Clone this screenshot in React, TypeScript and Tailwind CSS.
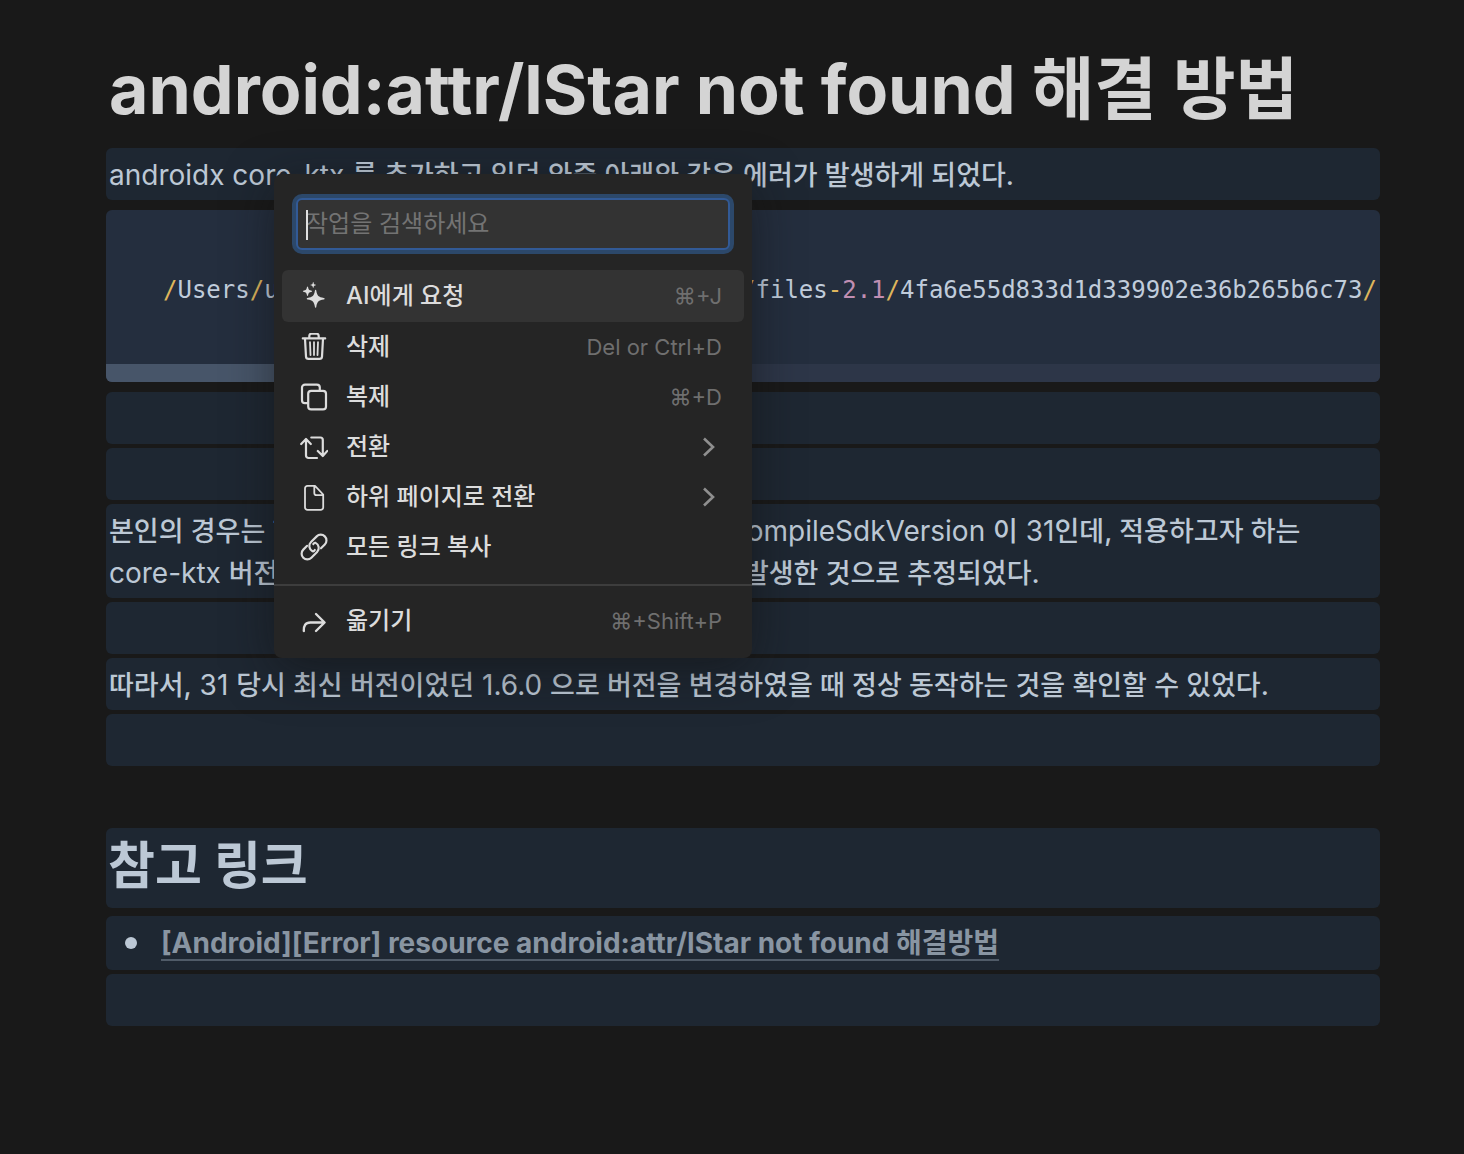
import type { ReactNode } from 'react';

type MenuItem = {
  label: string;
  icon: ReactNode;
  shortcut?: string;
  submenu?: boolean;
};

function Icon({ children }: { children: ReactNode }) {
  return (
    <svg
      viewBox="0 0 28 28"
      className="size-7 shrink-0"
      fill="none"
      stroke="currentColor"
      strokeWidth="2.2"
      strokeLinecap="round"
      strokeLinejoin="round"
      aria-hidden="true"
    >
      {children}
    </svg>
  );
}

const items: MenuItem[] = [
  {
    label: 'AI에게 요청',
    shortcut: '⌘+J',
    icon: (
      <Icon>
        <g fill="currentColor" stroke="none">
          <path d="M15.6 7.8c.5 0 .6.4.7.9.8 5 2.2 6.3 7.5 7.2.5.1.9.3.9.8s-.4.7-.9.8c-5.3.9-6.7 2.2-7.5 7.3-.1.5-.2.9-.7.9s-.6-.4-.7-.9c-.8-5.1-2.2-6.4-7.3-7.3-.5-.1-.9-.3-.9-.8s.4-.7.9-.8c5.1-.9 6.5-2.2 7.3-7.2.1-.5.2-.9.7-.9z" />
          <path d="M7.5 4.5c.3 0 .4.2.5.5.4 2.6 1 3.3 3.7 3.8.3.1.4.2.4.5s-.1.4-.4.5c-2.7.5-3.3 1.2-3.7 3.8-.1.3-.2.5-.5.5s-.4-.2-.5-.5c-.4-2.6-1-3.3-3.7-3.8-.3-.1-.4-.2-.4-.5s.1-.4.4-.5c2.700-.5 3.300-1.200 3.700-3.800.1-.3.200-.5.500-.5z" />
          <path d="M13.2.1c.2 0 .3.1.3.3.3 1.6.7 2 2.2 2.3.2 0 .3.1.3.3s-.1.3-.3.3c-1.5.3-1.9.7-2.2 2.3 0 .2-.1.3-.3.3s-.3-.1-.3-.3c-.3-1.600-.7-2-2.200-2.300-.2 0-.3-.1-.3-.3s.1-.3.300-.3c1.500-.3 1.900-.7 2.200-2.300 0-.2.100-.3.300-.3z" />
        </g>
      </Icon>
    ),
  },
  {
    label: '삭제',
    shortcut: 'Del or Ctrl+D',
    icon: (
      <Icon>
        <path d="M2.8 5.4h22.4M9.3 5V3A2.3 2.3 0 0 1 11.600.7h4.800A2.300 2.300 0 0 1 18.700 3v2" />
        <path d="M5 5.8 6 23.600a2.500 2.500 0 0 0 2.500 2.300h11a2.500 2.500 0 0 0 2.500-2.300L23 5.800" />
        <path strokeWidth="1.8" d="m10 9.200.5 12.800M14 9.200v12.800M18 9.200l-.5 12.800" />
      </Icon>
    ),
  },
  {
    label: '복제',
    shortcut: '⌘+D',
    icon: (
      <Icon>
        <rect x="8.2" y="7.8" width="17.8" height="18.6" rx="3" />
        <path d="M19.8 7.4V4.6a3 3 0 0 0-3-3H5a3 3 0 0 0-3 3v12.6a3 3 0 0 0 3 3h2.8" />
      </Icon>
    ),
  },
  {
    label: '전환',
    submenu: true,
    icon: (
      <Icon>
        <path d="M17 25H8.5A2.5 2.5 0 0 1 6 22.500V6.500M1.200 11 6 6l4.800 5M11.300 4.500h9A2.500 2.500 0 0 1 22.800 7v15.500M17.800 18l5 5 4.500-5" />
      </Icon>
    ),
  },
  {
    label: '하위 페이지로 전환',
    submenu: true,
    icon: (
      <Icon>
        <path
          strokeWidth="1.8"
          d="M15 2.9H7.5A2.5 2.5 0 0 0 5 5.400v19a2.500 2.500 0 0 0 2.500 2.500h13.200a2.500 2.500 0 0 0 2.500-2.500V11.500zM14.300 3v7a2.200 2.200 0 0 0 2.200 2.200h6.700"
        />
      </Icon>
    ),
  },
  {
    label: '모든 링크 복사',
    icon: (
      <Icon>
        <g transform="translate(-1.2 -1.2) scale(1.27)" strokeWidth="1.7">
          <path d="M11.4 9.7c.5-.9 1.2-1.2 1.8-1a4.5 4.5 0 0 1 1.2 7.2l-4.5 4.5a4.5 4.5 0 0 1-6.364-6.364l3-3" />
          <path d="M12.6 14.3c-.5.9-1.2 1.2-1.8 1a4.5 4.5 0 0 1-1.2-7.2l4.5-4.5a4.5 4.5 0 0 1 6.364 6.364l-3 3" />
        </g>
      </Icon>
    ),
  },
];

const moveItem: MenuItem = {
  label: '옮기기',
  shortcut: '⌘+Shift+P',
  icon: (
    <Icon>
      <path strokeWidth="2.4" d="M3.8 24c-.3-5.5 1.7-8.5 6.5-8.5h14M16 7l8.6 8.5L16 24" />
    </Icon>
  ),
};

function MenuRow({ item, active }: { item: MenuItem; active?: boolean }) {
  return (
    <li>
      <button
        type="button"
        className={`flex w-full items-center rounded-md pl-[18px] pr-[22px] text-left ${
          active ? 'h-[52px] bg-[#333333]' : 'h-[50px] hover:bg-[#333333]'
        }`}
      >
        {item.icon}
        <span className="ml-[18px] flex-1 text-2xl font-medium">{item.label}</span>
        {item.shortcut && <span className="text-[22px] text-[#6f6f6f]">{item.shortcut}</span>}
        {item.submenu && (
          <span className="text-[#8f8f8f]">
            <Icon>
              <path strokeWidth="2.6" strokeLinecap="butt" strokeLinejoin="miter" d="m10 5.500 9 8.500-9 8.500" />
            </Icon>
          </span>
        )}
      </button>
    </li>
  );
}

function ActionMenu() {
  return (
    <div className="absolute top-[174px] left-[274px] w-[478px] rounded-lg bg-[#252525] pt-6 pb-3 text-[#dcdcdc] shadow-[0_12px_48px_rgba(15,15,15,0.5)]">
      <div className="relative mx-[22px] mb-5">
        <input
          type="text"
          aria-label="작업을 검색하세요"
          placeholder="작업을 검색하세요"
          className="block h-[52px] w-full rounded-md border-2 border-[#325a96] bg-[#333333] px-2 pb-0.5 text-2xl caret-transparent ring-4 ring-[#2c486a] outline-none placeholder:text-[#737373]"
        />
        <span className="absolute top-3 left-2.5 h-[30px] w-0.5 bg-[#e0e0e0]" />
      </div>
      <ul className="px-2">
        {items.map((item, i) => (
          <MenuRow key={item.label} item={item} active={i === 0} />
        ))}
      </ul>
      <hr className="mt-3 mb-2.5 border-t-2 border-[#3d3d3d]" />
      <ul className="px-2">
        <MenuRow item={moveItem} />
      </ul>
    </div>
  );
}

function Block({ children }: { children?: ReactNode }) {
  return <p className="min-h-[52px] rounded-md bg-[#1e2732] px-[3px] pt-1.5 pb-1">{children}</p>;
}

// Hangul reads larger than the Latin text next to it, so it is set one pixel down
function Ko({ children }: { children: ReactNode }) {
  return <span className="text-[27px] leading-none font-medium">{children}</span>;
}

function Slash() {
  return <span className="text-[#deb55c]">/</span>;
}

function CodeBlock() {
  return (
    <div className="my-1.5 overflow-hidden rounded-md bg-[#242e3e]">
      <pre className="overflow-hidden pt-[62px] pb-14 pl-[57px] font-['DejaVu_Sans_Mono',monospace] text-2xl leading-9 text-[#c0ccdb]">
        <Slash />Users<Slash />username<Slash />.gradle<Slash />caches<Slash />modules
        <span className="text-[#deb55c]">-</span>
        <span className="text-[#c08eb2]">2</span>
        <Slash />files<span className="text-[#deb55c]">-</span>
        <span className="text-[#c08eb2]">2.1</span>
        <Slash />4fa6e55d833d1d339902e36b265b6c73<Slash />
      </pre>
      <div className="h-[18px] bg-[#2d3648]">
        <div className="h-full w-1/4 bg-[#475569]" />
      </div>
    </div>
  );
}

export default function App() {
  return (
    <div className="relative min-h-screen bg-[#191919] font-['Inter','Noto_Sans_CJK_KR',sans-serif]">
      <main className="pr-[84px] pb-32 pl-[106px] text-[28px] leading-[42px] text-[#bcc8d5]">
        <h1 className="px-[3px] pt-[47px] pb-[17px] text-[68px] leading-[84px] font-bold whitespace-nowrap text-[#d4d4d4]">
          android:attr/lStar not found 해결 방법
        </h1>

        <div className="flex flex-col gap-1">
          <Block>
            androidx core-ktx <Ko>를 추가하고 있던 와중 아래와 같은 에러가 발생하게 되었다.</Ko>
          </Block>
          <CodeBlock />
          <Block />
          <Block />
          <Block>
            <Ko>본인의 경우는 현재 안드로이드 프로젝트에 설정된 값인 </Ko>compileSdkVersion <Ko>이</Ko> 31
            <Ko>인데, 적용하고자 하는</Ko>
            <br />
            core-ktx <Ko>버전이 요구하는 버전은 그보다 높아서 에러가 발생한 것으로 추정되었다.</Ko>
          </Block>
          <Block />
          <Block>
            <Ko>따라서,</Ko> 31 <Ko>당시 최신 버전이었던</Ko> 1.6.0{' '}
            <Ko>으로 버전을 변경하였을 때 정상 동작하는 것을 확인할 수 있었다.</Ko>
          </Block>
          <Block />
        </div>

        <h2 className="mt-[62px] rounded-md bg-[#1e2732] px-0.5 pt-0.5 pb-1.5 text-[51px] leading-[72px] font-bold">참고 링크</h2>

        <div className="mt-2 flex flex-col gap-1">
          <ul className="rounded-md bg-[#1e2732] py-1.5">
            <li className="flex items-center">
              <span className="ml-[19px] size-3 rounded-full bg-[#bcc8d5]" />
              <a
                href="#"
                className="ml-6 font-bold text-[#8995a2] underline decoration-[#505b68] decoration-2 underline-offset-[6px]"
              >
                [Android][Error] resource android:attr/lStar not found 해결방법
              </a>
            </li>
          </ul>
          <Block />
        </div>
      </main>

      <ActionMenu />
    </div>
  );
}
